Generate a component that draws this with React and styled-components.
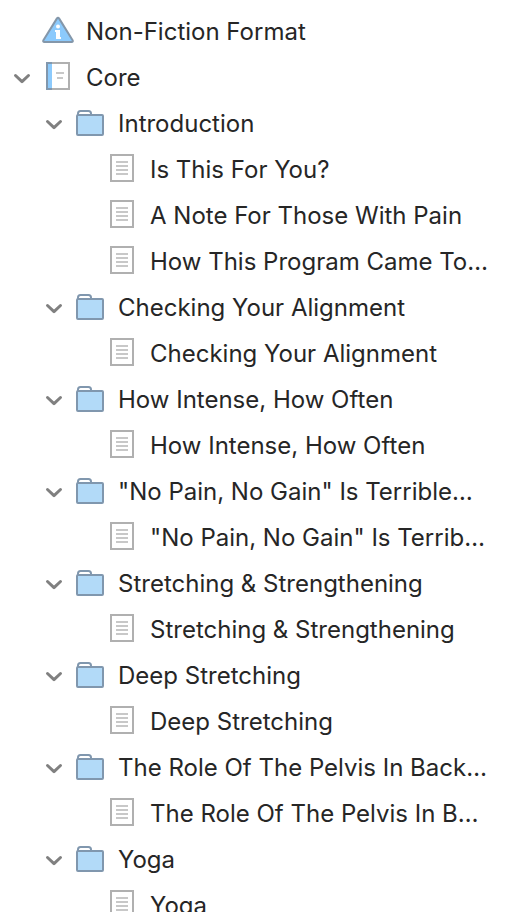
import { useState } from "react";
import styled, { createGlobalStyle } from "styled-components";

const folders = [
  {
    title: "Introduction",
    docs: [
      { title: "Is This For You?" },
      { title: "A Note For Those With Pain" },
      { title: "How This Program Came To…" },
    ],
  },
  { title: "Checking Your Alignment", docs: [{ title: "Checking Your Alignment" }] },
  { title: "How Intense, How Often", docs: [{ title: "How Intense, How Often" }] },
  { title: '"No Pain, No Gain" Is Terrible…', docs: [{ title: '"No Pain, No Gain" Is Terrib…' }] },
  { title: "Stretching & Strengthening", docs: [{ title: "Stretching & Strengthening" }] },
  { title: "Deep Stretching", docs: [{ title: "Deep Stretching" }] },
  { title: "The Role Of The Pelvis In Back…", docs: [{ title: "The Role Of The Pelvis In B…" }] },
  { title: "Yoga", docs: [{ title: "Yoga" }] },
];

const InfoIcon = () => (
  <svg width="34" height="32" viewBox="0 0 34 32" aria-hidden="true">
    <path
      d="M15.8 2.6Q17 1 18.2 2.6L31.6 24.2Q32.4 26 30.6 26H3.4Q1.6 26 2.4 24.2Z"
      fill="#8ccafc"
      stroke="#8497aa"
      strokeWidth="2"
      strokeLinejoin="round"
    />
    <circle cx="17" cy="10.5" r="2" fill="#fff" />
    <path d="M15 14h4v7h1v2h-5v-7h-1v-2z" fill="#fff" />
  </svg>
);

const BookIcon = () => (
  <svg width="34" height="32" viewBox="0 0 34 32" aria-hidden="true">
    <rect x="6" y="1" width="22" height="26" fill="#fff" stroke="#b0b0b0" strokeWidth="2" />
    <rect x="7" y="2" width="4" height="24" fill="#8ccafc" />
    <path d="M11 1H6v26h5" fill="none" stroke="#8197ad" strokeWidth="2" />
    <path d="M15 11h8M16 16h6" stroke="#c8c8c8" strokeWidth="2" />
  </svg>
);

const FolderIcon = () => (
  <svg width="34" height="32" viewBox="0 0 34 32" aria-hidden="true">
    <path d="M5 7V5.500Q5 3 7.500 3h8Q18 3 18 5.500V7" fill="#fff" stroke="#8097ae" strokeWidth="2" />
    <rect x="4" y="7" width="26" height="20" rx="1" fill="#b2daf8" stroke="#8097ae" strokeWidth="2" />
  </svg>
);

const DocIcon = () => (
  <svg width="34" height="32" viewBox="0 0 34 32" aria-hidden="true">
    <rect x="6" y="1" width="22" height="26" fill="#fff" stroke="#b0b0b0" strokeWidth="2" />
    <path d="M11 8h12M11 12h12M11 16h12M11 20h12" stroke="#c8c8c8" strokeWidth="2" />
  </svg>
);

const Row = ({ level, icon, title, open, onToggle }) => (
  <StyledRow $level={level}>
    {onToggle ? (
      <Toggle type="button" onClick={onToggle} aria-expanded={open} aria-label={title}>
        <Chevron $open={open} width="18" height="12" viewBox="0 0 18 12" aria-hidden="true">
          <path d="M2.500 3.500L9 9.700l6.500-6.200" />
        </Chevron>
      </Toggle>
    ) : (
      <Spacer />
    )}
    {icon}
    <Title>{title}</Title>
  </StyledRow>
);

const Folder = ({ folder }) => {
  const [open, setOpen] = useState(true);

  return (
    <li>
      <Row level={1} icon={<FolderIcon />} title={folder.title} open={open} onToggle={() => setOpen(!open)} />
      {open && (
        <List>
          {folder.docs.map((doc) => (
            <li key={doc.title}>
              <Row level={2} icon={<DocIcon />} title={doc.title} />
            </li>
          ))}
        </List>
      )}
    </li>
  );
};

const App = () => {
  const [open, setOpen] = useState(true);

  return (
    <>
      <GlobalStyle />
      <Binder aria-label="Binder">
        <List>
          <li>
            <Row level={0} icon={<InfoIcon />} title="Non-Fiction Format" />
          </li>
          <li>
            <Row level={0} icon={<BookIcon />} title="Core" open={open} onToggle={() => setOpen(!open)} />
            {open && (
              <List>
                {folders.map((folder) => (
                  <Folder key={folder.title} folder={folder} />
                ))}
              </List>
            )}
          </li>
        </List>
      </Binder>
    </>
  );
};

export default App;

const GlobalStyle = createGlobalStyle`
  body {
    background: #fff;
    margin: 0;
  }
`;
const Binder = styled.nav`
  box-sizing: border-box;
  color: #262626;
  font-family: Inter, "Liberation Sans", sans-serif;
  font-size: 24px;
  height: 100vh;
  line-height: 46px;
  overflow: hidden;
  padding-top: 9px;
`;
const List = styled.ul`
  list-style: none;
  margin: 0;
  padding: 0;
`;
const StyledRow = styled.div`
  align-items: center;
  display: flex;
  height: 46px;
  padding-left: ${({ $level }) => 10 + $level * 32}px;
  padding-right: 16px;
  svg {
    flex: none;
  }
`;
const Spacer = styled.span`
  flex: none;
  width: 31px;
`;
const Toggle = styled.button`
  align-items: center;
  background: none;
  border: 0;
  cursor: pointer;
  display: flex;
  flex: none;
  height: 32px;
  justify-content: flex-start;
  padding: 0 0 0 3px;
  width: 31px;
`;
const Chevron = styled.svg`
  fill: none;
  stroke: #808080;
  stroke-linecap: round;
  stroke-linejoin: round;
  stroke-width: 3px;
  transform: ${({ $open }) => ($open ? "none" : "rotate(-90deg)")};
`;
const Title = styled.span`
  margin-left: 11px;
  overflow: hidden;
  text-overflow: ellipsis;
  white-space: nowrap;
`;
